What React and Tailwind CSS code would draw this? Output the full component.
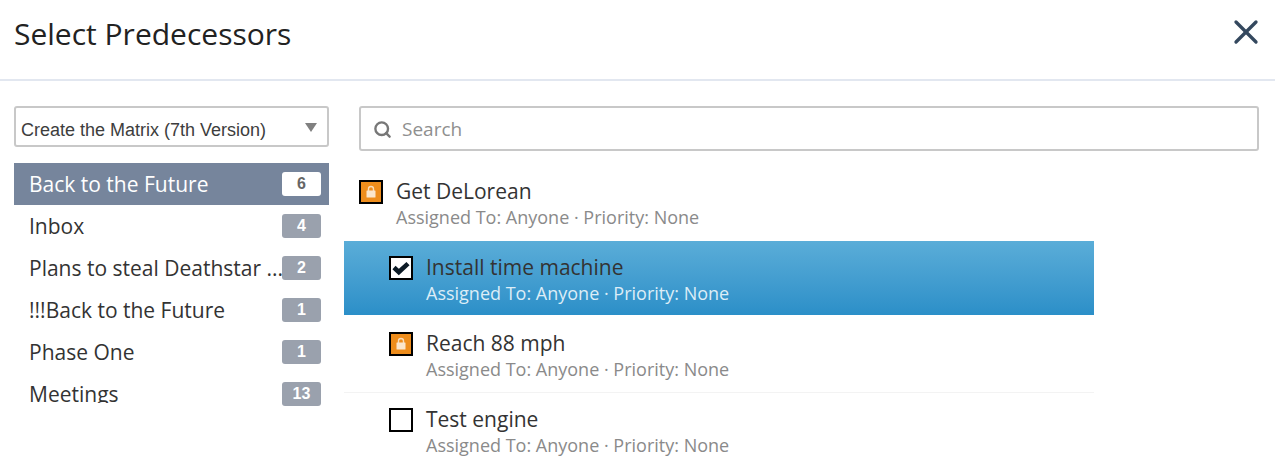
import React from "react";
import { X, Search } from "lucide-react";

const projects = [
  ["Back to the Future", 6, true],
  ["Inbox", 4],
  ["Plans to steal Deathstar ...", 2],
  ["!!!Back to the Future", 1],
  ["Phase One", 1],
  ["Meetings", 13],
];

function Lock() {
  return (
    <span className="flex h-6 w-6 items-center justify-center border-2 border-black bg-[#ee8d1c]">
      <svg width="12" height="14" viewBox="0 0 12 14" fill="none">
        <path d="M3.5 6V4a2.5 2.5 0 0 1 5 0v2" stroke="#f9dcb8" strokeWidth="1.4" />
        <rect x="1.5" y="5.5" width="9" height="7" rx="0.5" fill="#fbe6cc" />
      </svg>
    </span>
  );
}

function Check() {
  return (
    <span className="flex h-6 w-6 items-center justify-center border-2 border-black bg-white">
      <svg width="20" height="16" viewBox="0 0 20 16" fill="none">
        <path d="M3 7.5 L7.8 12 L17 3.6" stroke="#0b1a26" strokeWidth="4.6" />
      </svg>
    </span>
  );
}

function Task({ title, icon, active, indent, border }) {
  return (
    <div
      className={`flex w-[750px] items-start gap-[13px] ${active ? "h-[74px]" : "h-[76px]"} pt-[14px] ${indent ? "pl-[45px]" : "pl-[15px]"} ${
        active ? "bg-gradient-to-b from-[#5aadd8] to-[#2b8fc8]" : ""
      } ${border ? "border-b border-[#f3f3f3]" : ""}`}
    >
      <div className="mt-[1px] shrink-0">{icon}</div>
      <div className="-mt-[1px] min-w-0">
        <div className="text-[21px] leading-[27px] text-[#333333]">{title}</div>
        <div className={`mt-[1px] text-[18px] leading-[22px] ${active ? "text-[#dcedf7]" : "text-[#8a8a8a]"}`}>
          Assigned To: Anyone · Priority: None
        </div>
      </div>
    </div>
  );
}

export default function App() {
  return (
    <div className="h-[464px] w-[1275px] overflow-hidden bg-white font-['Open_Sans',sans-serif]">
      <header className="flex h-[81px] items-center justify-between border-b-2 border-[#e2e7f0] pb-[11px] pl-[14px] pr-[9px]">
        <h1 className="text-[30px] leading-[38px] text-[#222222]">Select Predecessors</h1>
        <X size={40} strokeWidth={2} className="-translate-y-[2px] text-[#34485e]" />
      </header>
      <div className="flex pt-[25px]">
        <aside className="ml-[14px] w-[315px] shrink-0">
          <div className="flex h-[41px] items-center justify-between rounded-[3px] border-2 border-[#c8c8c8] pl-[5px] pr-[10px] font-['Liberation_Sans',sans-serif] text-[18px] text-[#3d3d3d]">
            <span className="mt-[6px] leading-[24px]">Create the Matrix (7th Version)</span>
            <span className="mt-[1px] h-0 w-0 border-x-[6px] border-t-[9px] border-x-transparent border-t-[#808080]" />
          </div>
          <div className="mt-[16px] h-[243px] overflow-hidden">
            {projects.map(([name, count, active]) => (
              <div
                key={name}
                className={`flex h-[42px] items-center justify-between pl-[15px] pr-[8px] ${active ? "bg-[#76859c] text-white" : "text-[#333333]"}`}
              >
                <span className="-mr-[4px] w-[257px] shrink-0 overflow-hidden whitespace-nowrap text-[21px] leading-[17px]">{name}</span>
                <span
                  className={`relative flex h-6 w-[39px] shrink-0 items-center justify-center rounded-[3px] font-['Liberation_Sans',sans-serif] text-[16px] font-bold ${
                    active ? "bg-white text-[#666666]" : "bg-[#9aa1ad] text-white"
                  }`}
                >
                  {count}
                </span>
              </div>
            ))}
          </div>
        </aside>
        <main className="ml-[15px] min-w-0 flex-1">
          <div className="ml-[15px] flex h-[45px] w-[900px] items-center gap-[10px] rounded-[3px] border-2 border-[#c8c8c8] pl-[12px] pt-[1px]">
            <Search size={19} strokeWidth={3} className="text-[#777777]" />
            <span className="text-[19px] text-[#8f8f8f]">Search</span>
          </div>
          <div className="mt-[14px]">
            <Task title="Get DeLorean" icon={<Lock />} />
            <Task title="Install time machine" icon={<Check />} active indent />
            <div className="h-[2px]" />
            <Task title="Reach 88 mph" icon={<Lock />} indent border />
            <Task title="Test engine" icon={<span className="block h-6 w-6 border-2 border-black bg-white" />} indent />
          </div>
        </main>
      </div>
    </div>
  );
}
